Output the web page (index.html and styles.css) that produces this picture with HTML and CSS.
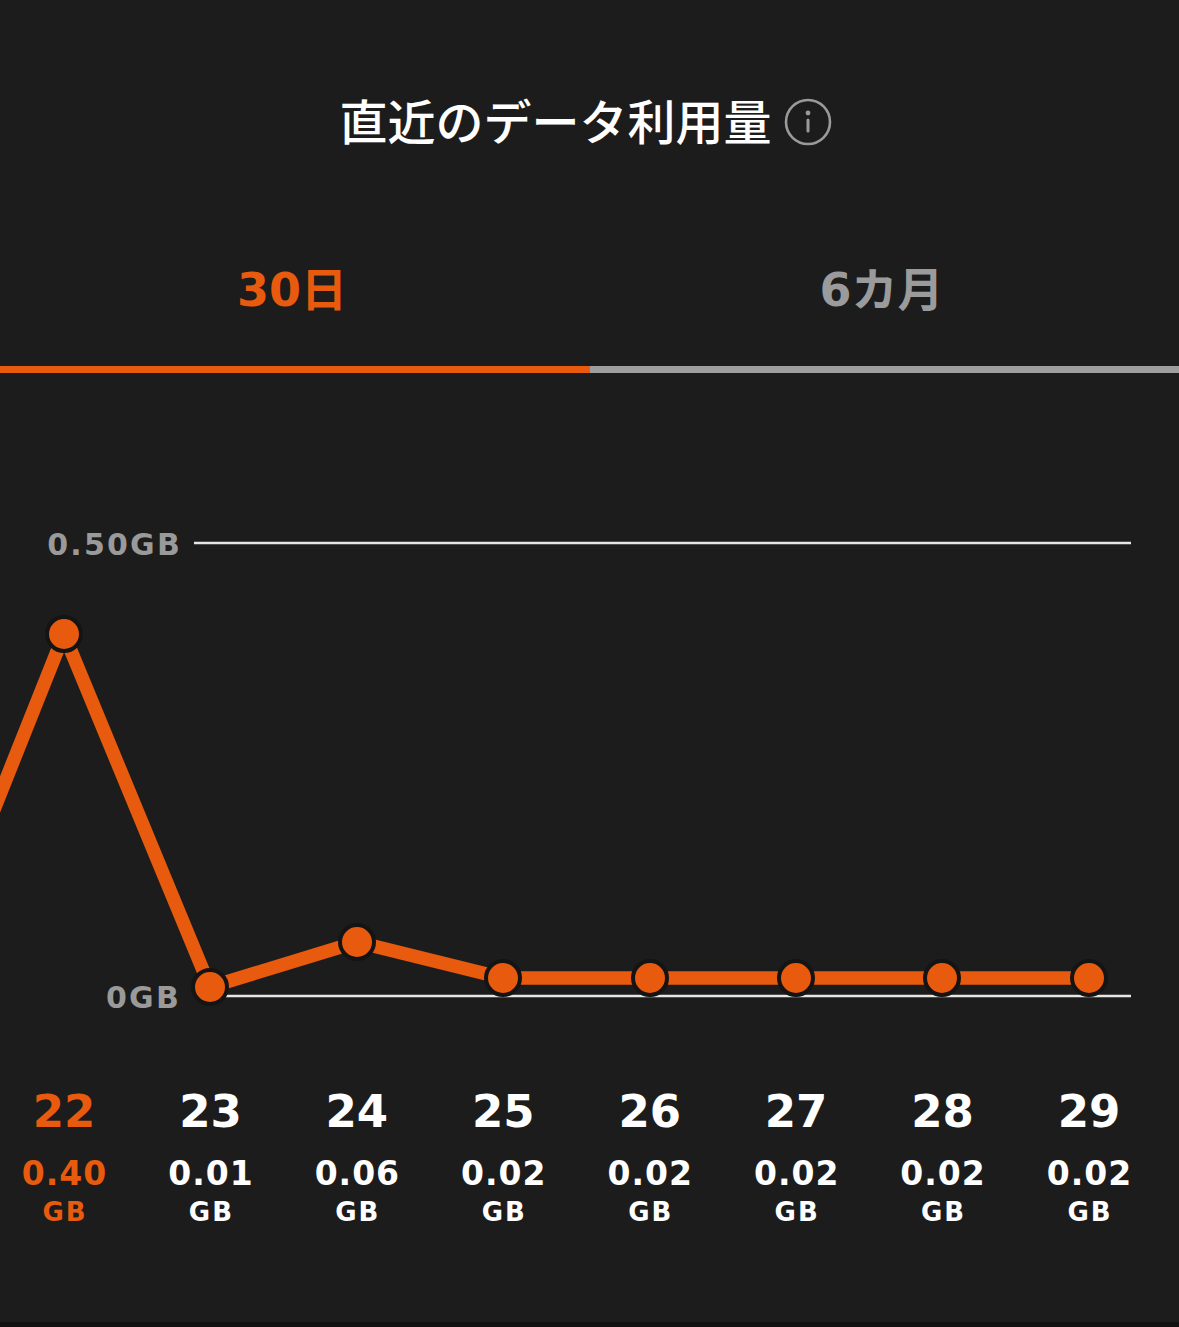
FILE: index.html
```html
<!DOCTYPE html>
<html lang="ja">
<head>
<meta charset="utf-8">
<title>直近のデータ利用量</title>
<link rel="stylesheet" href="styles.css">
</head>
<body>
<div class="page">
  <header class="title-row">
    <h1 class="title">直近のデータ利用量</h1>
    <svg class="info" width="48" height="48" viewBox="0 0 48 48" aria-label="info">
      <circle cx="24" cy="24" r="22" fill="none" stroke="#9a9a9a" stroke-width="2.6"/>
      <circle cx="24" cy="15" r="2.4" fill="#9a9a9a"/>
      <rect x="22.5" y="20.5" width="3" height="14" rx="1.5" fill="#9a9a9a"/>
    </svg>
  </header>

  <nav class="tabs">
    <div class="tab active"><span class="tab-label"><span class="num">30</span>日</span></div>
    <div class="tab"><span class="tab-label"><span class="num">6</span>カ月</span></div>
  </nav>

  <section class="chart">
    <svg class="chart-svg" width="1179" height="677" viewBox="0 373 1179 677">
      <text class="axis-label" x="182" y="544">0.50GB</text>
      <text class="axis-label" x="181" y="997">0GB</text>
      <line x1="194" y1="543" x2="1131" y2="543" class="grid"/>
      <line x1="194" y1="996" x2="1131" y2="996" class="grid"/>
      <polyline class="series" points="-82,1000 64,634 210,987 357,942 503,978 650,978 796,978 942,978 1089,978"/>
      <g class="dots">
        <circle cx="64" cy="634" r="17"/>
        <circle cx="210" cy="987" r="17"/>
        <circle cx="357" cy="942" r="17"/>
        <circle cx="503" cy="978" r="17"/>
        <circle cx="650" cy="978" r="17"/>
        <circle cx="796" cy="978" r="17"/>
        <circle cx="942" cy="978" r="17"/>
        <circle cx="1089" cy="978" r="17"/>
      </g>
    </svg>
  </section>

  <section class="days">
    <div class="day selected"><div class="day-num">22</div><div class="day-val">0.40</div><div class="day-unit">GB</div></div>
    <div class="day"><div class="day-num">23</div><div class="day-val">0.01</div><div class="day-unit">GB</div></div>
    <div class="day"><div class="day-num">24</div><div class="day-val">0.06</div><div class="day-unit">GB</div></div>
    <div class="day"><div class="day-num">25</div><div class="day-val">0.02</div><div class="day-unit">GB</div></div>
    <div class="day"><div class="day-num">26</div><div class="day-val">0.02</div><div class="day-unit">GB</div></div>
    <div class="day"><div class="day-num">27</div><div class="day-val">0.02</div><div class="day-unit">GB</div></div>
    <div class="day"><div class="day-num">28</div><div class="day-val">0.02</div><div class="day-unit">GB</div></div>
    <div class="day"><div class="day-num">29</div><div class="day-val">0.02</div><div class="day-unit">GB</div></div>
  </section>
</div>
<footer class="bottom-strip"></footer>
</body>
</html>
```

FILE: styles.css
```css
html, body {
  margin: 0;
  padding: 0;
  background: #1c1c1c;
}
body {
  width: 1179px;
  height: 1327px;
  overflow: hidden;
  display: flex;
  flex-direction: column;
  font-family: "DejaVu Sans", "Noto Sans CJK JP", sans-serif;
  color: #ffffff;
}
.page {
  flex: 1;
  display: flex;
  flex-direction: column;
}

/* Title */
.title-row {
  display: flex;
  align-items: center;
  justify-content: center;
  gap: 12px;
  padding-top: 95px;
  height: 48px;
  padding-right: 8px;
}
.title {
  margin: 0;
  font-family: "Noto Sans CJK JP", sans-serif;
  font-weight: 500;
  font-size: 48px;
  line-height: 48px;
  color: #ffffff;
}
.info {
  display: block;
  flex: none;
  margin-top: 5px;
}

/* Tabs */
.tabs {
  display: grid;
  grid-template-columns: 590px 589px;
}
.tab {
  display: flex;
  justify-content: center;
  align-items: flex-start;
  padding-top: 120px;
  height: 103px;
  border-bottom: 7px solid #9e9e9e;
}
.tab.active {
  border-bottom-color: #e85a0e;
}
.tab-label {
  font-family: "Noto Sans CJK JP", sans-serif;
  font-weight: 700;
  font-size: 46px;
  line-height: 46px;
  color: #9b9b9b;
  margin-left: -6px;
}
.tab.active .tab-label {
  color: #e85a0e;
}
.tab-label .num {
  font-family: "DejaVu Sans", sans-serif;
}

/* Chart */
.chart {
  height: 677px;
}
.chart-svg {
  display: block;
  overflow: visible;
}
.axis-label {
  font-family: "DejaVu Sans", sans-serif;
  font-weight: 700;
  font-size: 30px;
  letter-spacing: 2.2px;
  fill: #9a9a9a;
  text-anchor: end;
  dominant-baseline: central;
}
.grid {
  stroke: #e6e6e6;
  stroke-width: 2.5;
}
.series {
  fill: none;
  stroke: #e85a0e;
  stroke-width: 13.5;
  stroke-linejoin: miter;
}
.dots circle {
  fill: #e85a0e;
  stroke: #141414;
  stroke-width: 4;
}

/* Day labels */
.days {
  display: grid;
  grid-template-columns: repeat(8, 146.43px);
  margin-left: -9.2px;
  padding-top: 37px;
}
.day {
  display: flex;
  flex-direction: column;
  align-items: center;
  font-family: "DejaVu Sans", sans-serif;
  font-weight: 700;
  color: #ffffff;
}
.day.selected {
  color: #e85a0e;
}
.day-num {
  font-size: 45px;
  line-height: 50px;
}
.day-val {
  margin-top: 17px;
  font-size: 33px;
  line-height: 40px;
  letter-spacing: 1px;
  padding-left: 1px;
}
.day-unit {
  margin-top: 3px;
  font-size: 26px;
  line-height: 30px;
  letter-spacing: 2px;
  padding-left: 2px;
}

.bottom-strip {
  height: 5px;
  background: #111111;
  flex: none;
}
```
